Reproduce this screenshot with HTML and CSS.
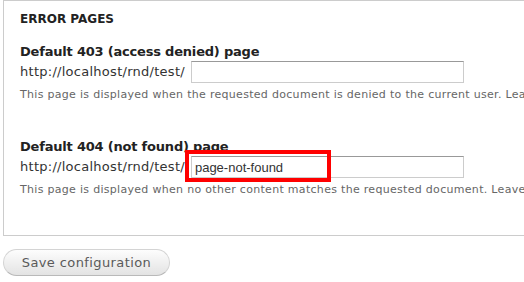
FILE: index.html
```html
<!DOCTYPE html>
<html>
<head>
<meta charset="utf-8">
<link rel="stylesheet" href="styles.css">
</head>
<body>
<div class="page">
  <fieldset class="box">
    <div class="title">ERROR PAGES</div>
    <div class="item first">
      <div class="label">Default 403 (access denied) page</div>
      <div class="row">
        <span class="prefix">http://localhost/rnd/test/</span>
        <span class="field"><input class="text" type="text" value=""></span>
      </div>
      <div class="desc">This page is displayed when the requested document is denied to the current user. Leave blank to display a generic "access denied" page.</div>
    </div>
    <div class="item second">
      <div class="label">Default 404 (not found) page</div>
      <div class="row">
        <span class="prefix">http://localhost/rnd/test/</span>
        <span class="field"><input class="text" type="text" value="page-not-found"><span class="highlight"></span></span>
      </div>
      <div class="desc">This page is displayed when no other content matches the requested document. Leave blank to display a generic "page not found" page.</div>
    </div>
  </fieldset>
  <div class="actions">
    <button class="btn" type="button">Save configuration</button>
  </div>
</div>
</body>
</html>
```
FILE: styles.css
```css
html, body {
  margin: 0;
  padding: 0;
  background: #fff;
  overflow: hidden;
}
body {
  font-family: "DejaVu Sans", Verdana, sans-serif;
  color: #333;
}
.page {
  padding-left: 3px;
  width: 640px;
}
.box {
  margin: 0;
  border: 1px solid #ccc;
  padding: 10px 16px 20px 16px;
  min-width: 0;
  box-sizing: border-box;
  height: 236px;
}
.title {
  font-size: 12px;
  font-weight: bold;
  line-height: 16px;
  color: #222;
  text-transform: uppercase;
}
.item.first {
  margin-top: 17px;
}
.item.second {
  margin-top: 37px;
}
.label {
  font-size: 13px;
  font-weight: bold;
  line-height: 16px;
  color: #222;
  letter-spacing: -0.2px;
}
.row {
  display: flex;
  align-items: center;
  margin-top: 1px;
  white-space: nowrap;
}
.prefix {
  font-size: 13px;
  line-height: 22px;
  color: #333;
  letter-spacing: 0.27px;
  margin-right: 6px;
}
.field {
  position: relative;
  display: inline-block;
}
.text {
  display: block;
  box-sizing: border-box;
  width: 273px;
  height: 22px;
  margin: 0;
  padding: 0 3px;
  border: 1px solid #ccc;
  border-top-color: #999;
  font-family: "Liberation Sans", Arial, sans-serif;
  font-size: 13px;
  color: #333;
  background: #fff;
  outline: none;
}
.highlight {
  position: absolute;
  left: -6px;
  top: -6px;
  width: 146px;
  height: 32px;
  box-sizing: border-box;
  border: 4px solid #f00;
}
.desc {
  font-size: 11px;
  line-height: 15px;
  color: #666;
  letter-spacing: 0.3px;
  margin-top: 4px;
  white-space: nowrap;
}
.actions {
  padding-top: 13px;
}
.btn {
  display: block;
  width: 167px;
  height: 27px;
  box-sizing: border-box;
  border: 1px solid #d4d4d4;
  border-bottom-color: #b9b9b9;
  border-radius: 14px;
  background: linear-gradient(#fdfdfd, #e3e3e3);
  font-family: "DejaVu Sans", Verdana, sans-serif;
  font-size: 13px;
  letter-spacing: 0.4px;
  color: #5a5a5a;
  padding: 0;
  margin: 0;
}
```
